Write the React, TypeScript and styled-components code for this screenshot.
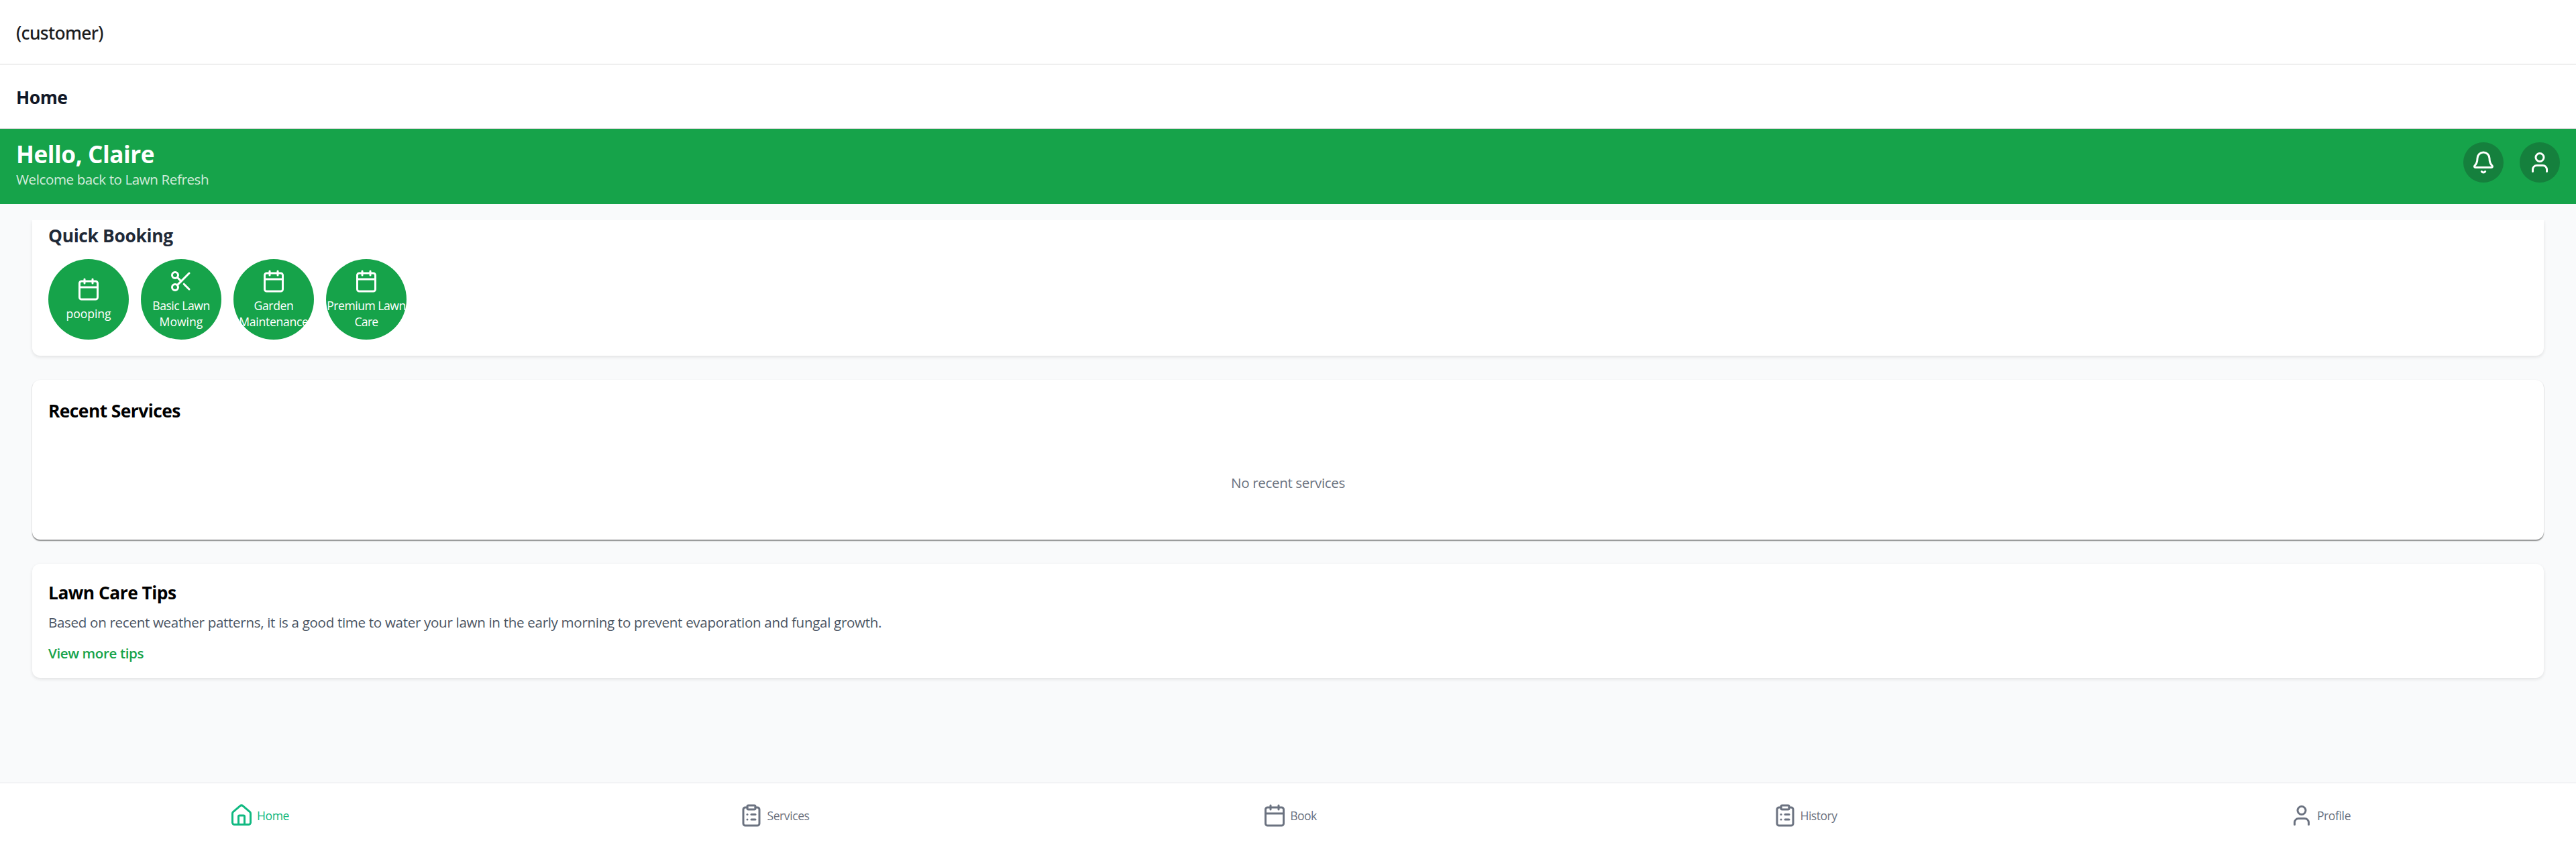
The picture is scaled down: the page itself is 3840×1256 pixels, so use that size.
import React from 'react';
import styled, { createGlobalStyle } from 'styled-components';
import { Bell, Calendar, ClipboardList, House, Scissors, User, type LucideIcon } from 'lucide-react';

const Global = createGlobalStyle`
  *, *::before, *::after { box-sizing: border-box; }
  body {
    margin: 0;
    font-family: "Segoe UI", "Open Sans", "Noto Sans", sans-serif;
    background: #f9fafb;
  }
  h1, h2, p { margin: 0; }
  button { font: inherit; border: 0; padding: 0; cursor: pointer; }
`;

const Screen = styled.div`
  display: flex;
  flex-direction: column;
  height: 1256px;
  background: #f9fafb;
  overflow: hidden;
`;

const TitleBar = styled.header`
  display: flex;
  align-items: center;
  flex: none;
  height: 96px;
  padding: 3px 24px 0;
  background: #fff;
  border-bottom: 1px solid #d8d8d8;
`;

const BarTitle = styled.h1<{ $weight: number; $color: string; $track: number }>`
  font-family: "Segoe UI", "Noto Sans", sans-serif;
  font-size: 26.4px;
  line-height: 36px;
  font-weight: ${(p) => p.$weight};
  color: ${(p) => p.$color};
  letter-spacing: ${(p) => p.$track}px;
`;

const Hero = styled.section`
  display: flex;
  justify-content: space-between;
  align-items: flex-start;
  flex: none;
  height: 112px;
  padding: 12px 24px;
  background: #16a34a;
`;

const Greeting = styled.h2`
  font-size: 35.2px;
  line-height: 50px;
  font-weight: 700;
  letter-spacing: -0.46px;
  color: #fff;
`;

const Welcome = styled.p`
  font-size: 20.6px;
  line-height: 26px;
  letter-spacing: -0.42px;
  color: #fff;
  opacity: 0.8;
`;

const HeroActions = styled.div`
  display: flex;
  gap: 24px;
  padding-top: 8px;
`;

const RoundButton = styled.button`
  display: flex;
  align-items: center;
  justify-content: center;
  width: 60px;
  height: 60px;
  border-radius: 50%;
  background: #15803d;
  color: #fff;
`;

const Content = styled.main`
  display: flex;
  flex-direction: column;
  gap: 36px;
  flex: 1;
  min-height: 0;
  padding: 24px 48px 0;
`;

const Card = styled.section`
  flex: none;
  background: #fff;
  border-radius: 12px;
  box-shadow: 0 2px 5px rgba(0, 0, 0, 0.1);
`;

const BookingCard = styled(Card)`
  height: 202px;
  padding: 5px 24px 24px;
  border-radius: 0 0 12px 12px;
  clip-path: inset(0 -12px -12px -12px);
`;

const RecentCard = styled(Card)`
  height: 238px;
  padding: 28px 24px;
  box-shadow: 0 1.5px 1.5px rgba(0, 0, 0, 0.45);
`;

const TipsCard = styled(Card)`
  height: 170px;
  padding: 25px 24px 22px;
`;

const CardTitle = styled.h2<{ $color?: string; $track: number }>`
  font-size: 26.4px;
  line-height: 36px;
  font-weight: 700;
  color: ${(p) => p.$color ?? '#000'};
  letter-spacing: ${(p) => p.$track}px;
`;

const ServiceRow = styled.div`
  display: flex;
  gap: 18px;
  margin-top: 17px;
`;

const ServiceBubble = styled.button`
  display: flex;
  flex-direction: column;
  align-items: center;
  justify-content: center;
  gap: 6px;
  width: 120px;
  height: 120px;
  border-radius: 50%;
  background: #16a34a;
  color: #fff;
`;

const BubbleLabel = styled.span`
  display: flex;
  flex-direction: column;
  align-items: center;
`;

const BubbleLine = styled.span<{ $track: number }>`
  font-size: 17.6px;
  line-height: 24px;
  white-space: nowrap;
  letter-spacing: ${(p) => p.$track}px;
`;

const EmptyText = styled.p`
  margin-top: 74px;
  font-size: 20.6px;
  line-height: 30px;
  letter-spacing: -0.37px;
  text-align: center;
  color: #6b7280;
`;

const TipText = styled.p`
  margin-top: 11px;
  font-size: 20.6px;
  line-height: 30px;
  letter-spacing: -0.325px;
  color: #4b5563;
`;

const TipLink = styled.button`
  display: block;
  margin-top: 16px;
  background: none;
  font-size: 20.6px;
  line-height: 30px;
  font-weight: 600;
  letter-spacing: -0.4px;
  color: #16a34a;
`;

const TabBar = styled.nav`
  display: flex;
  flex: none;
  height: 90px;
  background: #fff;
  border-top: 1px solid #e5e7eb;
`;

const Tab = styled.a<{ $active?: boolean }>`
  display: flex;
  flex: 1;
  align-items: center;
  justify-content: center;
  gap: 5px;
  padding: 7px 0 0 5px;
  color: ${(p) => (p.$active ? '#10b981' : '#6b7280')};
`;

const TabLabel = styled.span<{ $track: number }>`
  font-size: 17.6px;
  line-height: 24px;
  letter-spacing: ${(p) => p.$track}px;
`;

type Line = [text: string, track: number];

const services: { icon: LucideIcon; lines: Line[] }[] = [
  { icon: Calendar, lines: [['pooping', -0.1]] },
  { icon: Scissors, lines: [['Basic Lawn', -0.49], ['Mowing', 0]] },
  { icon: Calendar, lines: [['Garden', -0.36], ['Maintenance', -0.3]] },
  { icon: Calendar, lines: [['Premium Lawn', -0.5], ['Care', -0.7]] },
];

const tabs: { icon: LucideIcon; label: string; track: number; active?: boolean }[] = [
  { icon: House, label: 'Home', track: -0.47, active: true },
  { icon: ClipboardList, label: 'Services', track: -0.44 },
  { icon: Calendar, label: 'Book', track: -0.57 },
  { icon: ClipboardList, label: 'History', track: -0.53 },
  { icon: User, label: 'Profile', track: -0.4 },
];

export default function App() {
  return (
    <>
      <Global />
      <Screen>
        <TitleBar>
          <BarTitle $weight={500} $color="#1c1c1e" $track={-0.65}>(customer)</BarTitle>
        </TitleBar>
        <TitleBar>
          <BarTitle $weight={700} $color="#111827" $track={-0.4}>Home</BarTitle>
        </TitleBar>
        <Hero>
          <div>
            <Greeting>Hello, Claire</Greeting>
            <Welcome>Welcome back to Lawn Refresh</Welcome>
          </div>
          <HeroActions>
            <RoundButton aria-label="Notifications"><Bell size={36} /></RoundButton>
            <RoundButton aria-label="Account"><User size={36} /></RoundButton>
          </HeroActions>
        </Hero>
        <Content>
          <BookingCard>
            <CardTitle $color="#1f2937" $track={-0.35}>Quick Booking</CardTitle>
            <ServiceRow>
              {services.map(({ icon: Icon, lines }) => (
                <ServiceBubble key={lines[0][0]}>
                  <Icon size={36} />
                  <BubbleLabel>
                    {lines.map(([text, track]) => (
                      <BubbleLine key={text} $track={track}>{text}</BubbleLine>
                    ))}
                  </BubbleLabel>
                </ServiceBubble>
              ))}
            </ServiceRow>
          </BookingCard>
          <RecentCard>
            <CardTitle $track={-0.57}>Recent Services</CardTitle>
            <EmptyText>No recent services</EmptyText>
          </RecentCard>
          <TipsCard>
            <CardTitle $track={-0.53}>Lawn Care Tips</CardTitle>
            <TipText>
              Based on recent weather patterns, it is a good time to water your lawn in the early morning to prevent
              evaporation and fungal growth.
            </TipText>
            <TipLink>View more tips</TipLink>
          </TipsCard>
        </Content>
        <TabBar>
          {tabs.map(({ icon: Icon, label, track, active }) => (
            <Tab key={label} $active={active}>
              <Icon size={36} />
              <TabLabel $track={track}>{label}</TabLabel>
            </Tab>
          ))}
        </TabBar>
      </Screen>
    </>
  );
}
